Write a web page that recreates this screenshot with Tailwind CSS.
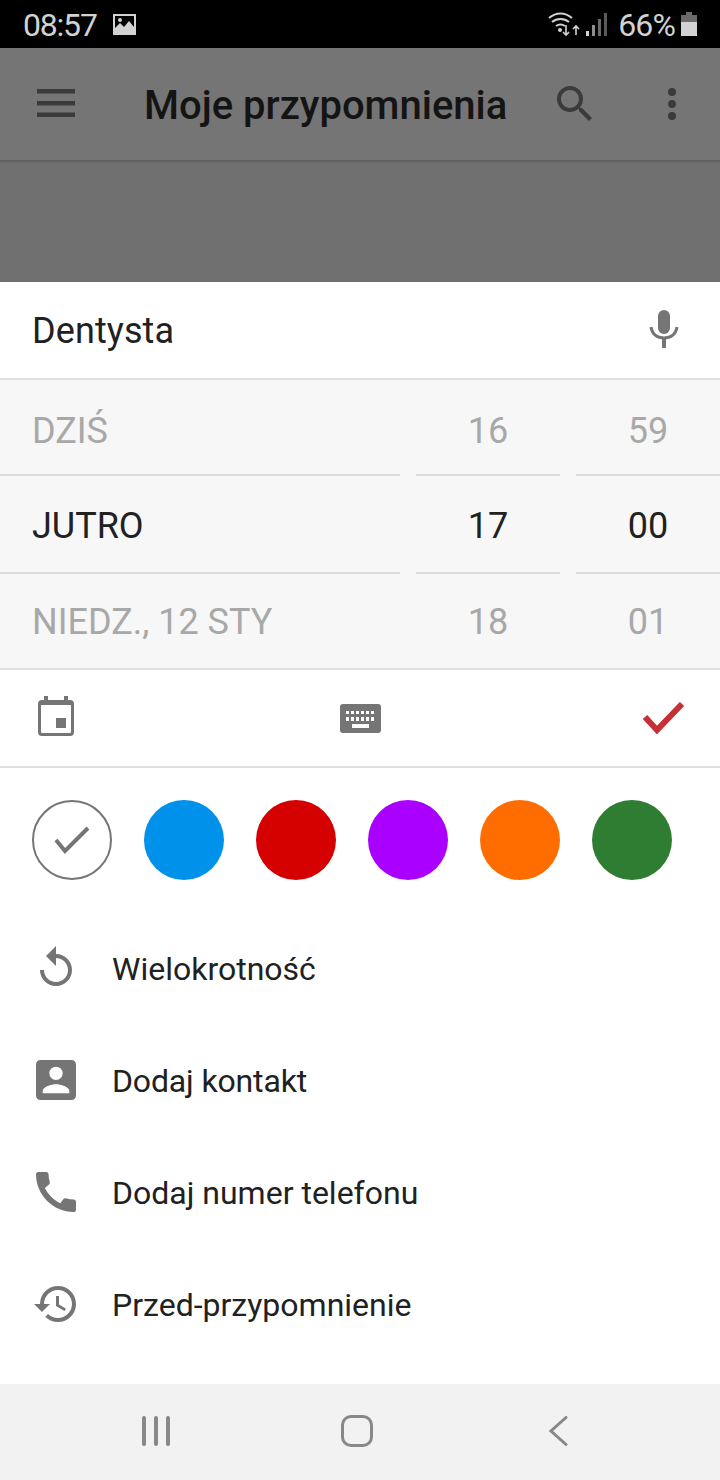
<!DOCTYPE html>
<html lang="pl">
<head>
<meta charset="utf-8">
<script src="https://cdn.jsdelivr.net/npm/@tailwindcss/browser@4"></script>
</head>
<body class="m-0">
<div class="w-[720px] h-[1480px] flex flex-col overflow-hidden bg-white font-['Roboto',sans-serif] text-[#212121]">
  <!-- status bar -->
  <div class="h-12 bg-black flex items-center pl-[23px] pr-[23px] text-[#d2d2d2] shrink-0">
    <span class="text-[32px] leading-none tracking-[-1.2px] mt-[1px]">08:57</span>
    <svg class="ml-[15px]" width="24" height="24" viewBox="0 0 24 24"><path fill="#d2d2d2" fill-rule="evenodd" d="M1 2h23v21H1zM3 4v12l5-5 4 4 5-6 5 6V4zM8 6a2 2 0 1 0 0 4 2 2 0 0 0 0-4z"/></svg>
    <div class="flex-1"></div>
    <svg width="32" height="26" viewBox="0 0 32 26" fill="none" stroke="#d2d2d2" stroke-width="2"><path d="M1 7C8 1 17 1 24 7M4 11c5-4 12-4 17 0M8 15c3-2 6-2 9 0"/><circle cx="12" cy="19" r="2" fill="#d2d2d2" stroke="none"/><path d="M18 14v10M15 21l3 3 3-3M28 24V15M25 18l3-3 3 3" stroke-width="1.600"/></svg>
    <svg class="ml-[6px]" width="21" height="26" viewBox="0 0 21 26"><rect x="0" y="20" width="3" height="5" fill="#d2d2d2"/><rect x="6" y="14" width="3" height="11" fill="#8e8e8e"/><rect x="12" y="8" width="3" height="17" fill="#6a6a6a"/><rect x="18" y="2" width="3" height="23" fill="#5a5a5a"/></svg>
    <span class="ml-[11px] text-[32px] leading-none tracking-[-0.9px] mt-[1px]">66%</span>
    <svg class="ml-[6px]" width="16" height="24" viewBox="0 0 16 24"><path fill="#6a6a6a" d="M5 0h6v3h5v7H0V3h5z"/><rect y="10" width="16" height="14" fill="#d2d2d2"/></svg>
  </div>
  <!-- app bar under scrim -->
  <div class="h-[113px] bg-[#757575] border-b border-[#5f5f5f] shadow-[0_1px_2px_rgba(0,0,0,0.15)] flex items-center relative shrink-0 z-10">
    <svg class="absolute left-[37px] top-[41px]" width="38" height="28" viewBox="0 0 38 28" fill="#3b3b3b"><rect y="0" width="38" height="4.500"/><rect y="12" width="38" height="4.500"/><rect y="23.500" width="38" height="4.500"/></svg>
    <span class="absolute left-[144px] top-[34px] text-[40px] leading-[48px] font-medium text-[#141414] whitespace-nowrap">Moje przypomnienia</span>
    <svg class="absolute left-[551px] top-[32px]" width="48" height="48" viewBox="0 0 24 24" fill="#3b3b3b"><path d="M15.500 14h-.79l-.28-.27A6.470 6.470 0 0 0 16 9.500 6.500 6.500 0 1 0 9.500 16c1.610 0 3.090-.59 4.230-1.570l.27.28v.79l5 4.990L20.490 19l-4.990-5zm-6 0C7.010 14 5 11.990 5 9.500S7.010 5 9.500 5 14 7.010 14 9.500 11.990 14 9.500 14z"/></svg>
    <svg class="absolute left-[648px] top-[32px]" width="48" height="48" viewBox="0 0 24 24" fill="#3b3b3b"><path d="M12 8a2 2 0 1 0 0-4 2 2 0 0 0 0 4zm0 2a2 2 0 1 0 0 4 2 2 0 0 0 0-4zm0 6a2 2 0 1 0 0 4 2 2 0 0 0 0-4z"/></svg>
  </div>
  <div class="h-[121px] bg-[#707070] shrink-0"></div>
  <!-- title input -->
  <div class="h-[98px] border-b-2 border-[#e0e0e0] flex items-center justify-between pl-[32px] pr-[36px] shrink-0">
    <span class="text-[36px] leading-none tracking-[0.1px] mt-[2px]">Dentysta</span>
    <svg width="40" height="40" viewBox="0 0 40 40" fill="none"><rect x="14" y="0" width="12" height="24" rx="6" fill="#757575"/><path d="M7 17c1 7 6 11 13 11s12-4 13-11" stroke="#757575" stroke-width="3"/><rect x="18" y="28" width="4" height="10" fill="#757575"/></svg>
  </div>
  <!-- wheel picker -->
  <div class="h-[290px] bg-[#f7f7f7] border-b-2 border-[#e0e0e0] grid grid-cols-[400px_144px_144px] gap-x-4 grid-rows-[94px_100px_94px] text-[36px] leading-none shrink-0">
    <div class="flex items-center pl-[32px] pt-[8px] text-[#a8a8a8]">DZIŚ</div>
    <div class="flex items-center justify-center pt-[8px] text-[#a8a8a8]">16</div>
    <div class="flex items-center justify-center pt-[8px] text-[#a8a8a8]">59</div>
    <div class="flex items-center pl-[32px] pt-[4px] border-y-2 border-[#dcdcdc]">JUTRO</div>
    <div class="flex items-center justify-center pt-[4px] border-y-2 border-[#dcdcdc]">17</div>
    <div class="flex items-center justify-center pt-[4px] border-y-2 border-[#dcdcdc]">00</div>
    <div class="flex items-center pl-[32px] pt-[2px] text-[#a8a8a8]">NIEDZ., 12 STY</div>
    <div class="flex items-center justify-center pt-[2px] text-[#a8a8a8]">18</div>
    <div class="flex items-center justify-center pt-[2px] text-[#a8a8a8]">01</div>
  </div>
  <!-- tools row -->
  <div class="h-[98px] border-b-2 border-[#e0e0e0] flex items-center justify-between pl-[38px] pr-[35px] shrink-0">
    <svg width="36" height="40" viewBox="0 0 36 40" class="-mt-[4px]"><path fill="#757575" fill-rule="evenodd" d="M6 0h4v4h16V0h4v4h2a4 4 0 0 1 4 4v28a4 4 0 0 1-4 4H4a4 4 0 0 1-4-4V8a4 4 0 0 1 4-4h2zM3 9v27a1 1 0 0 0 1 1h28a1 1 0 0 0 1-1V9z"/><rect x="18" y="22" width="10" height="10" fill="#757575"/></svg>
    <svg width="41" height="30" viewBox="0 0 41 30" class="mt-[1px] ml-[4px]"><rect width="41" height="29" rx="3" fill="#757575"/><g fill="#fff"><rect x="6" y="7" width="3" height="3"/><rect x="11" y="7" width="3" height="3"/><rect x="16" y="7" width="3" height="3"/><rect x="21" y="7" width="3" height="3"/><rect x="26" y="7" width="3" height="3"/><rect x="31" y="7" width="3" height="3"/><rect x="6" y="13" width="3" height="4"/><rect x="11" y="13" width="3" height="4"/><rect x="16" y="13" width="3" height="4"/><rect x="21" y="13" width="3" height="4"/><rect x="26" y="13" width="3" height="4"/><rect x="31" y="13" width="3" height="4"/><rect x="12" y="20" width="17" height="4"/></g></svg>
    <svg width="42" height="32" viewBox="0 0 42 32" class="-mt-[1px]"><path fill="none" stroke="#c62f33" stroke-width="6" d="M2 15l12 13L39 2"/></svg>
  </div>
  <!-- colours -->
  <div class="flex gap-8 pl-8 pt-8 shrink-0">
    <div class="w-20 h-20 rounded-full border-2 border-[#757575] flex items-center justify-center">
      <svg width="36" height="28" viewBox="0 0 36 28"><path fill="none" stroke="#757575" stroke-width="4" d="M2 14l9 11L34 2"/></svg>
    </div>
    <div class="w-20 h-20 rounded-full bg-[#0091ea]"></div>
    <div class="w-20 h-20 rounded-full bg-[#d50000]"></div>
    <div class="w-20 h-20 rounded-full bg-[#aa00ff]"></div>
    <div class="w-20 h-20 rounded-full bg-[#ff6d00]"></div>
    <div class="w-20 h-20 rounded-full bg-[#2e7d32]"></div>
  </div>
  <!-- options -->
  <div class="flex flex-col pt-[32px] shrink-0">
    <div class="h-28 flex items-center text-[32px] leading-none">
      <svg class="ml-[32px] w-12 h-12" viewBox="0 0 24 24" fill="#757575"><path d="M12 5V1L7 6l5 5V7c3.310 0 6 2.690 6 6s-2.690 6-6 6-6-2.690-6-6H4c0 4.420 3.580 8 8 8s8-3.580 8-8-3.580-8-8-8z"/></svg>
      <span class="ml-8 mt-[2px]">Wielokrotność</span>
    </div>
    <div class="h-28 flex items-center text-[32px] leading-none">
      <svg class="ml-[36px] w-10 h-10" viewBox="3 3 18 18" fill="#757575"><path d="M3 5v14a2 2 0 0 0 2 2h14a2 2 0 0 0 2-2V5a2 2 0 0 0-2-2H5a2 2 0 0 0-2 2zm12 4a3 3 0 1 1-6 0 3 3 0 0 1 6 0zm-9 8c0-2 4-3.100 6-3.100s6 1.100 6 3.100v1H6v-1z"/></svg>
      <span class="ml-9 mt-[2px] tracking-[-0.15px]">Dodaj kontakt</span>
    </div>
    <div class="h-28 flex items-center text-[32px] leading-none">
      <svg class="ml-[36px] w-10 h-10" viewBox="3 3 18 18" fill="#757575"><path d="M20.010 15.380c-1.230 0-2.420-.2-3.530-.56a.977.977 0 0 0-1.010.24l-1.570 1.970c-2.830-1.350-5.480-3.900-6.890-6.830l1.950-1.660c.27-.28.350-.67.240-1.020-.37-1.110-.56-2.300-.56-3.530 0-.54-.45-.99-.99-.99H4.190C3.650 3 3 3.240 3 3.990 3 13.280 10.730 21 20.010 21c.71 0 .99-.63.990-1.180v-3.450c0-.54-.45-.99-.99-.99z"/></svg>
      <span class="ml-9 mt-[2px]">Dodaj numer telefonu</span>
    </div>
    <div class="h-28 flex items-center text-[32px] leading-none">
      <svg class="ml-[32px] w-12 h-12" viewBox="0 0 24 24" fill="#757575"><path d="M13 3a9 9 0 0 0-9 9H1l3.890 3.890.07.140L9 12H6c0-3.870 3.130-7 7-7s7 3.130 7 7-3.130 7-7 7c-1.930 0-3.680-.79-4.940-2.060l-1.420 1.420A8.954 8.954 0 0 0 13 21a9 9 0 0 0 0-18zm-1 5v5l4.280 2.540.72-1.210-3.500-2.080V8H12z"/></svg>
      <span class="ml-8 mt-[2px]">Przed-przypomnienie</span>
    </div>
  </div>
  <div class="flex-1"></div>
  <!-- nav bar -->
  <div class="h-24 bg-[#f2f2f2] relative shrink-0">
    <svg class="absolute left-[140px] top-[32px]" width="32" height="32" viewBox="0 0 32 32" fill="#888888"><rect x="2" y="0" width="4" height="30" rx="2"/><rect x="14" y="0" width="4" height="30" rx="2"/><rect x="26" y="0" width="4" height="30" rx="2"/></svg>
    <div class="absolute left-[341px] top-[31px] w-8 h-8 rounded-[10px] border-[3px] border-[#888888]"></div>
    <svg class="absolute left-[548px] top-[32px]" width="22" height="32" viewBox="0 0 22 32"><path fill="none" stroke="#888888" stroke-width="3" stroke-linecap="round" d="M18 1.500L3 15l15 13.500"/></svg>
  </div>
</div>
</body>
</html>
